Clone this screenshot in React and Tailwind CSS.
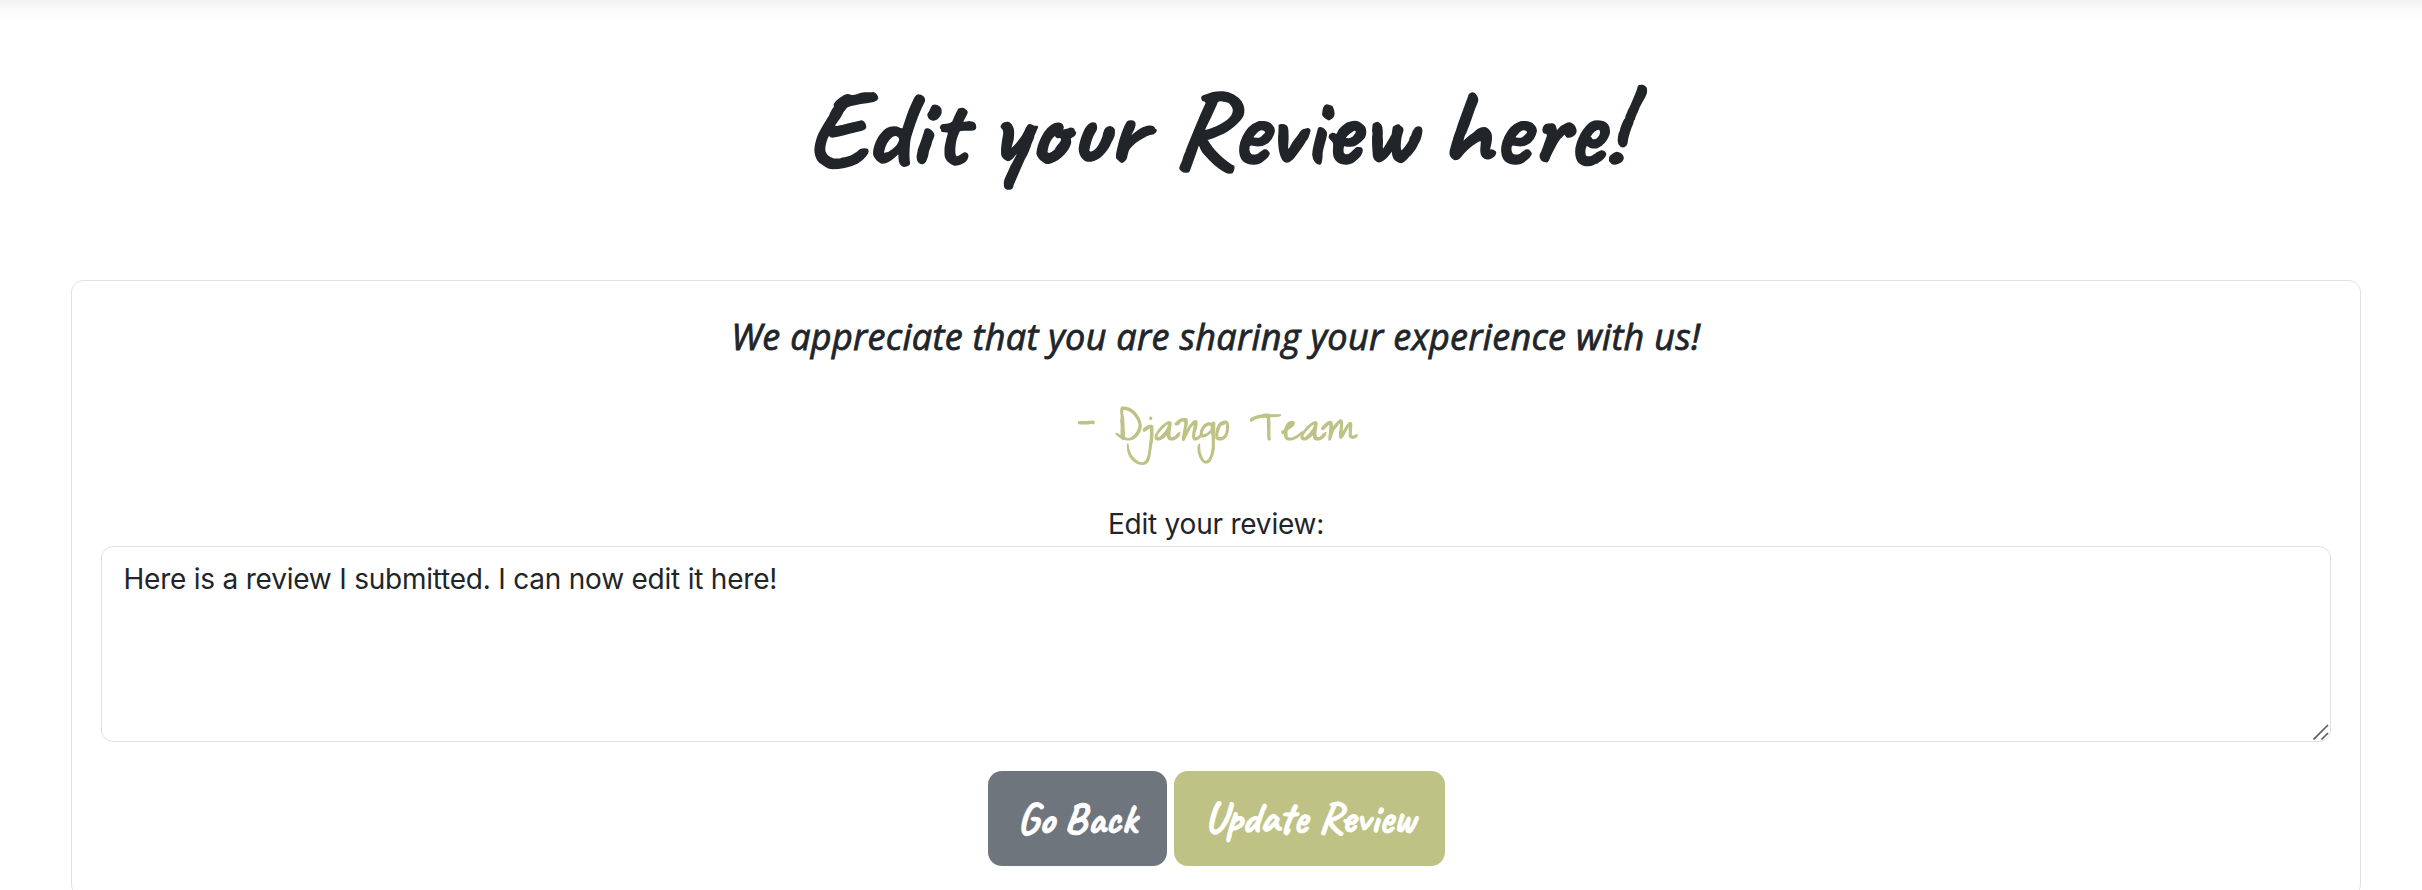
export default function App() {
  return (
    <div className="h-[890px] overflow-hidden bg-white font-['Inter',sans-serif] text-[28px] leading-[42px] tracking-[-0.22px] text-[#212529]">
      <div className="h-6 bg-linear-to-b from-[#f2f2f2] via-[#fcfcfc] to-white" />
      <h1 className="flex h-[256px] justify-center pt-[39px] pl-[10px] font-['Caveat','Lato',sans-serif] text-[108px] leading-[130px] font-bold tracking-normal whitespace-nowrap [-webkit-text-stroke:1.5px_#212529]">
        Edit your Review here!
      </h1>
      <main className="ml-[71px] flex h-[617px] w-[2290px] flex-col items-center rounded-xl border border-[#dee2e6] px-[29px] pt-[29px]">
        <p className="h-[54px] font-['Open_Sans',sans-serif] text-[36px] leading-[54px] tracking-[0.3px] italic whitespace-nowrap [-webkit-text-stroke:0.8px_#212529]">We appreciate that you are sharing your experience with us!</p>
        <p className="mt-[40px] h-[60px] font-['Zeyada','Lato',sans-serif] text-[54px] leading-[60px] tracking-normal text-[#bec285] whitespace-nowrap [-webkit-text-stroke:1.2px_#bec285]">- Django Team</p>
        <label className="mt-[39px]">Edit your review:</label>
        <div className="relative mt-px h-[196px] w-full">
          <textarea className="block h-full w-full resize-none rounded-xl border border-[#dee2e6] px-[21.5px] pt-[11px] outline-none" defaultValue="Here is a review I submitted. I can now edit it here!" />
          <svg className="pointer-events-none absolute right-[2px] bottom-[2px] h-4 w-4" viewBox="0 0 16 16" stroke="#5f5f5f" strokeWidth="1.7">
            <path d="M0.5 15.5L15 1M8.5 15.5L15 9" />
          </svg>
        </div>
        <div className="mt-[29px] flex gap-[7px] font-['Caveat','Lato',sans-serif] text-[43.2px] font-bold tracking-normal text-white [-webkit-text-stroke:0.8px_white]">
          <button className="h-[95px] w-[179px] rounded-[14px] bg-[#6e757d]">Go Back</button>
          <button className="h-[95px] w-[271px] rounded-[14px] bg-[#bec285] pb-[2px] pl-[2px]">Update Review</button>
        </div>
      </main>
    </div>
  );
}
